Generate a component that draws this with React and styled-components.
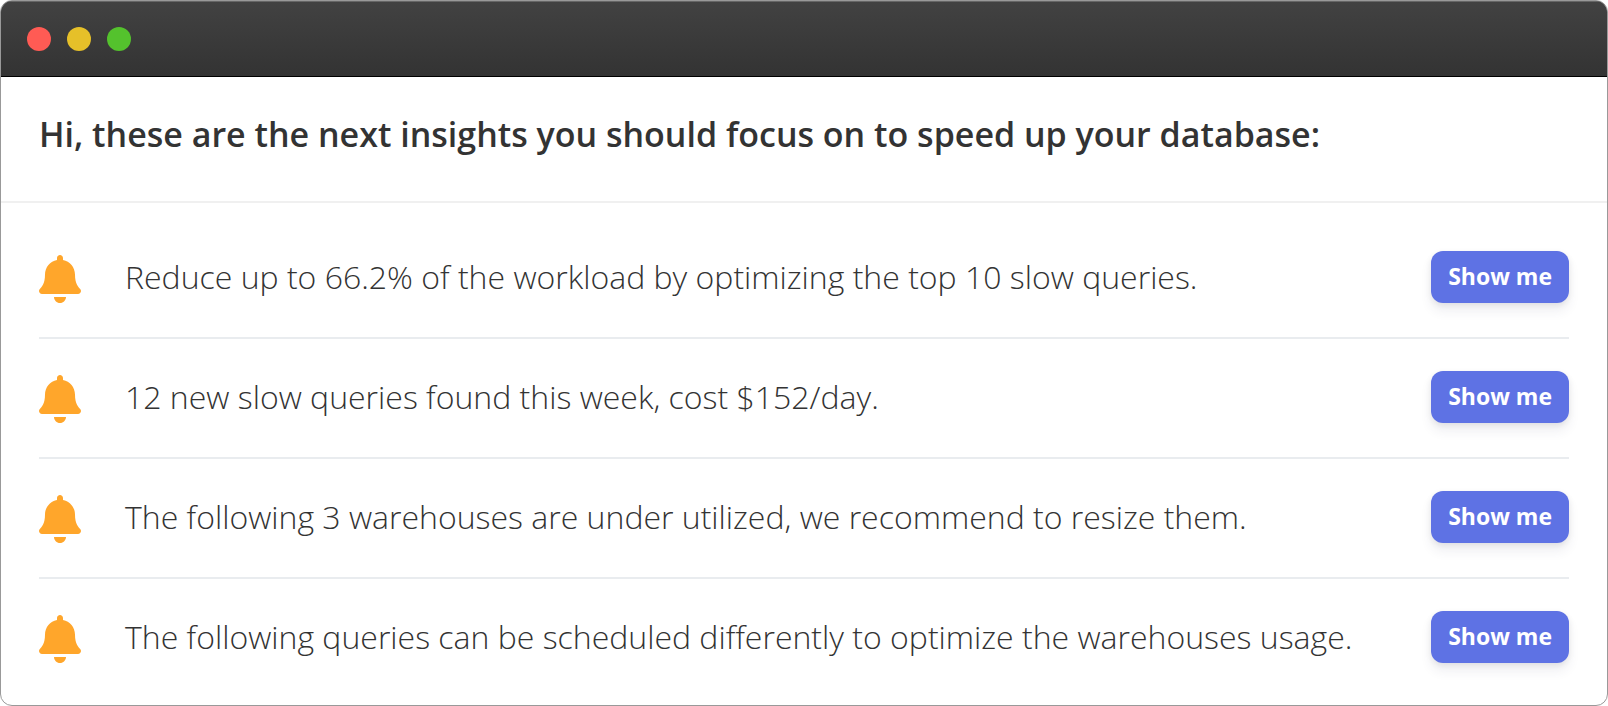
import React from "react";
import styled, { createGlobalStyle } from "styled-components";
import { FaBell } from "react-icons/fa";

const insights = [
  "Reduce up to 66.2% of the workload by optimizing the top 10 slow queries.",
  "12 new slow queries found this week, cost $152/day.",
  "The following 3 warehouses are under utilized, we recommend to resize them.",
  "The following queries can be scheduled differently to optimize the warehouses usage.",
];

export default function App() {
  return (
    <>
      <GlobalStyle />
      <Window>
        <TitleBar>
          <Dot $color="#ff5b54" />
          <Dot $color="#e6c029" />
          <Dot $color="#54c22d" />
        </TitleBar>
        <Header>
          <Title>
            Hi, these are the next insights you should focus on to speed up your
            database:
          </Title>
        </Header>
        <List>
          {insights.map((text) => (
            <Row key={text}>
              <BellIcon aria-hidden="true" />
              <Message>{text}</Message>
              <ShowButton type="button">Show me</ShowButton>
            </Row>
          ))}
        </List>
      </Window>
    </>
  );
}

const GlobalStyle = createGlobalStyle`
  * {
    box-sizing: border-box;
  }
  body {
    margin: 0;
    background: #fff;
    color: #333;
    font-family: "Open Sans", sans-serif;
  }
`;

const Window = styled.main`
  min-height: 100vh;
  overflow: hidden;
  background: #fff;
  border: 1px solid #999;
  border-radius: 12px;
`;

const TitleBar = styled.div`
  display: flex;
  align-items: center;
  gap: 16px;
  height: 76px;
  padding: 0 26px;
  background: linear-gradient(#424242, #333);
  border-bottom: 1px solid #000;
  box-shadow: inset 0 1px 0 #666;
`;

const Dot = styled.span`
  width: 24px;
  height: 24px;
  border-radius: 50%;
  background: ${(props) => props.$color};
`;

const Header = styled.header`
  padding: 33px 38px 43px;
  border-bottom: 2px solid #f0f0f0;
`;

const Title = styled.h1`
  margin: 0;
  font-size: 34px;
  font-weight: 600;
  line-height: 48px;
`;

const List = styled.ul`
  margin: 0;
  padding: 16px 38px 0;
  list-style: none;
`;

const Row = styled.li`
  display: flex;
  align-items: flex-end;
  padding: 32px 0 34px;
  border-bottom: 2px solid #e9ecef;
  &:last-child {
    border-bottom: none;
  }
`;

const BellIcon = styled(FaBell)`
  flex: none;
  width: 42px;
  height: 48px;
  color: #ffa62b;
`;

const Message = styled.p`
  flex: 1;
  margin: 0;
  padding: 0 44px;
  font-size: 32px;
  font-weight: 300;
  line-height: 52px;
`;

const ShowButton = styled.button`
  flex: none;
  height: 52px;
  padding: 0 17px 2px;
  border: none;
  border-radius: 12px;
  background: #5e72e4;
  color: #fff;
  font-family: inherit;
  font-size: 23px;
  font-weight: 700;
  line-height: 36px;
  cursor: pointer;
  box-shadow: 0 8px 12px rgba(50, 50, 93, 0.08), 0 2px 6px rgba(0, 0, 0, 0.08);
`;
